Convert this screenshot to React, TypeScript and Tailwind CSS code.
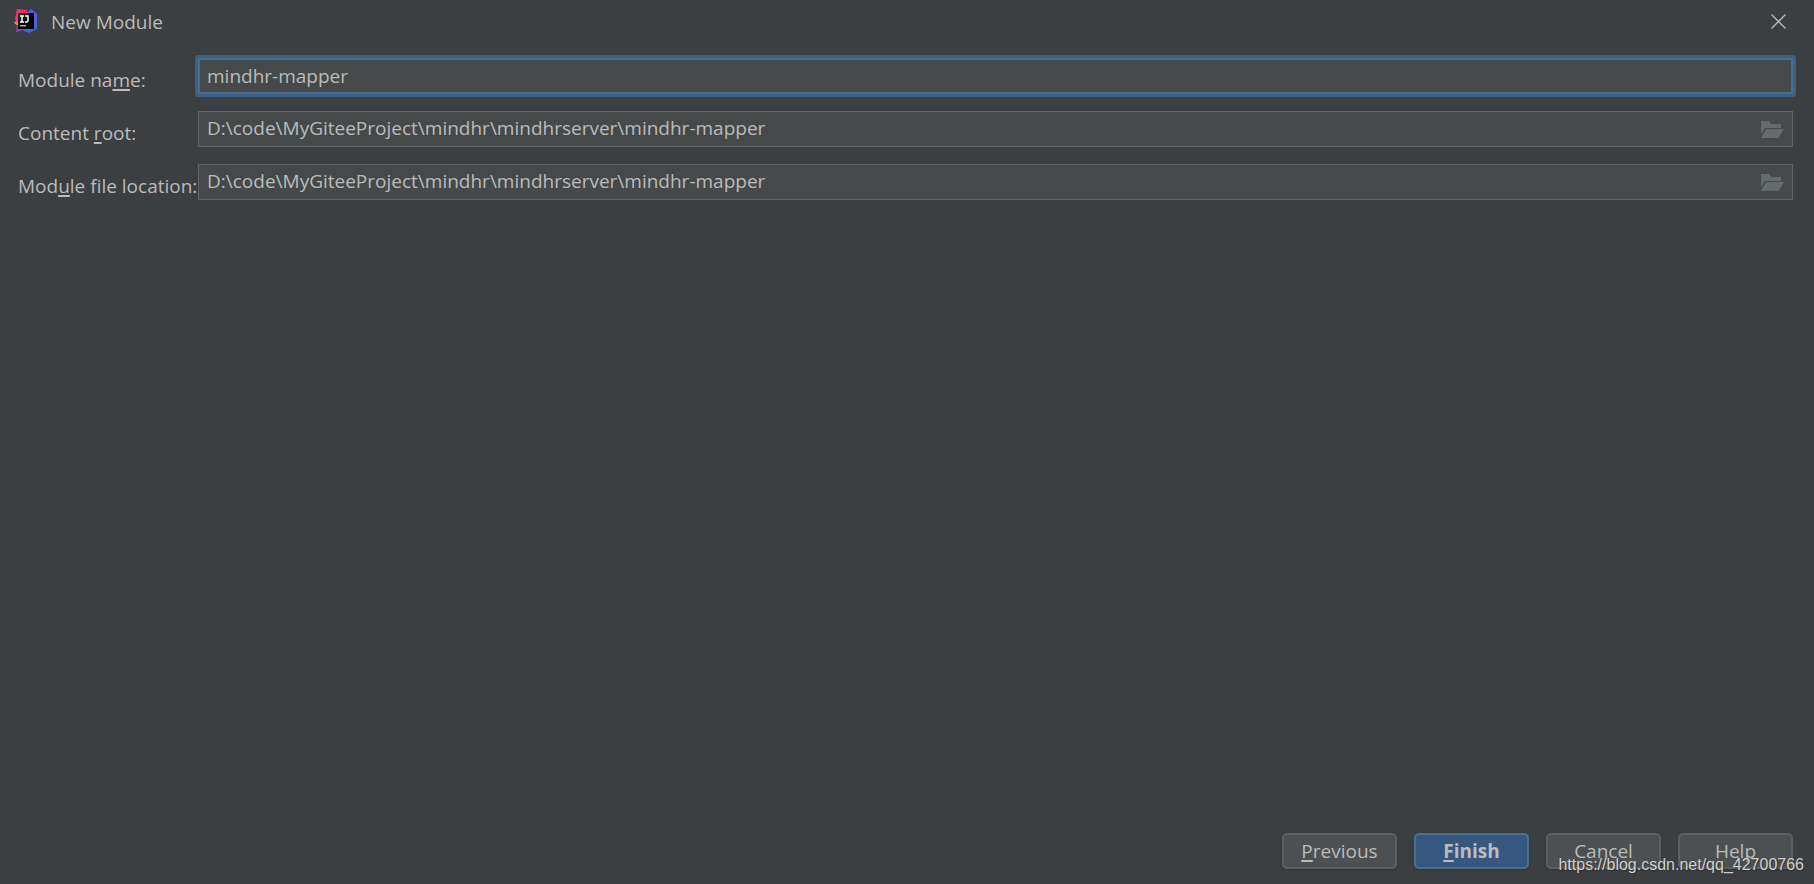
import { useState } from 'react';
import type { ReactNode } from 'react';

function IdeaLogo() {
  return (
    <svg width="24" height="24" viewBox="0 0 24 24" className="shrink-0" aria-hidden="true">
      <defs>
        <linearGradient id="idea-blue" x1="0" y1="1" x2="1" y2="0">
          <stop offset="0" stopColor="#2f6fe8" />
          <stop offset="0.5" stopColor="#3d63e6" />
          <stop offset="1" stopColor="#6b57e0" />
        </linearGradient>
        <linearGradient id="idea-red" x1="0" y1="1" x2="1" y2="0">
          <stop offset="0" stopColor="#f23f7a" />
          <stop offset="1" stopColor="#fb1e52" />
        </linearGradient>
        <linearGradient id="idea-black" x1="0" y1="0" x2="1" y2="1">
          <stop offset="0" stopColor="#3c3c3c" />
          <stop offset="0.5" stopColor="#000000" />
        </linearGradient>
      </defs>
      <path d="M0 14L5 9V18Z" fill="#f98a1c" />
      <path d="M3 0L13 1L15 8L5 15L1 10Z" fill="url(#idea-red)" />
      <path d="M17 0L23 5V20L15 24L8 21L12 5Z" fill="url(#idea-blue)" />
      <path d="M3 16L12 18L9 21L2 23Z" fill="#9a3bc4" />
      <rect x="4" y="4" width="16" height="16" fill="url(#idea-black)" />
      <path d="M6 7H10M8 7V13M6 13H10M11 7H14V11.500Q14 13 12.500 13H10.800" fill="none" stroke="#ffffff" strokeWidth="1.500" />
      <rect x="6" y="16" width="6" height="1.500" fill="#b0b0b0" />
    </svg>
  );
}

function FolderIcon() {
  return (
    <svg width="23" height="17" viewBox="0 0 23 17" fill="#646a6e" aria-hidden="true">
      <path d="M0 0H8L10 3H20V7H4L0 13Z" />
      <path d="M5 8H23L17.500 17H0Z" />
    </svg>
  );
}

function CloseIcon() {
  return (
    <svg width="15" height="15" viewBox="0 0 15 15" fill="none" stroke="#bbbbbb" strokeWidth="1.300" aria-hidden="true">
      <path d="M0.500 0.500L14.500 14.500M14.500 0.500L0.500 14.500" />
    </svg>
  );
}

function Mnemonic({ children }: { children: ReactNode }) {
  return <span className="underline decoration-2 underline-offset-2">{children}</span>;
}

const labelClass = 'pt-2 whitespace-nowrap';
const inputClass = 'h-9 w-full bg-[#45494a] text-[#bbbbbb] outline-none';
const buttonClass = 'h-9 w-[115px] rounded-[5px] border-2 shadow-[0_1px_2px_#333537]';

function PathField({ id, value, onChange }: { id: string; value: string; onChange: (value: string) => void }) {
  return (
    <div className="relative">
      <input
        id={id}
        type="text"
        value={value}
        onChange={(e) => onChange(e.target.value)}
        className={`${inputClass} border border-[#646464] pb-0.5 pl-2 pr-10`}
      />
      <button type="button" aria-label="Browse" className="absolute right-[9px] top-[10px]">
        <FolderIcon />
      </button>
    </div>
  );
}

export default function App() {
  const [name, setName] = useState('mindhr-mapper');
  const [contentRoot, setContentRoot] = useState('D:\\code\\MyGiteeProject\\mindhr\\mindhrserver\\mindhr-mapper');
  const [fileLocation, setFileLocation] = useState('D:\\code\\MyGiteeProject\\mindhr\\mindhrserver\\mindhr-mapper');

  return (
    <div className="relative flex min-h-screen flex-col bg-[#3c3f41] font-['Open_Sans','Noto_Sans',sans-serif] text-[19px] leading-6 text-[#bbbbbb]">
      <header className="flex h-[42px] items-center justify-between pl-[14px] pr-7">
        <div className="flex items-center gap-[13px]">
          <IdeaLogo />
          <h1 className="pt-0.5">New Module</h1>
        </div>
        <button type="button" aria-label="Close">
          <CloseIcon />
        </button>
      </header>

      <form className="flex flex-1 flex-col pb-[15px] pl-[18px] pr-[21px] pt-4">
        <div className="grid grid-cols-[177px_1fr] items-center gap-x-[3px] gap-y-[17px]">
          <label htmlFor="module-name" className={labelClass}>
            Module na<Mnemonic>m</Mnemonic>e:
          </label>
          <input
            id="module-name"
            type="text"
            value={name}
            onChange={(e) => setName(e.target.value)}
            className={`${inputClass} rounded-[1px] border-2 border-[#466d94] pl-[7px] ring-3 ring-[#3d6185]`}
          />
          <label htmlFor="content-root" className={labelClass}>
            Content <Mnemonic>r</Mnemonic>oot:
          </label>
          <PathField id="content-root" value={contentRoot} onChange={setContentRoot} />
          <label htmlFor="file-location" className={labelClass}>
            Mod<Mnemonic>u</Mnemonic>le file location:
          </label>
          <PathField id="file-location" value={fileLocation} onChange={setFileLocation} />
        </div>

        <div className="mt-auto flex justify-end gap-[17px]">
          <button type="button" className={`${buttonClass} border-[#5e6060] bg-[#4c5052]`}>
            <Mnemonic>P</Mnemonic>revious
          </button>
          <button type="button" className={`${buttonClass} border-[#4c708c] bg-[#365880] font-bold`}>
            <Mnemonic>F</Mnemonic>inish
          </button>
          <button type="button" className={`${buttonClass} border-[#5e6060] bg-[#4c5052]`}>
            Cancel
          </button>
          <button type="button" className={`${buttonClass} border-[#5e6060] bg-[#4c5052]`}>
            Help
          </button>
        </div>
      </form>

      <a
        href="https://blog.csdn.net/qq_42700766"
        className="absolute bottom-[7px] right-[10px] font-['Liberation_Sans',Arial,sans-serif] text-base leading-6 text-[#d0d0d0] [text-shadow:1px_1px_1px_#333333]"
      >
        https://blog.csdn.net/qq_42700766
      </a>
    </div>
  );
}
